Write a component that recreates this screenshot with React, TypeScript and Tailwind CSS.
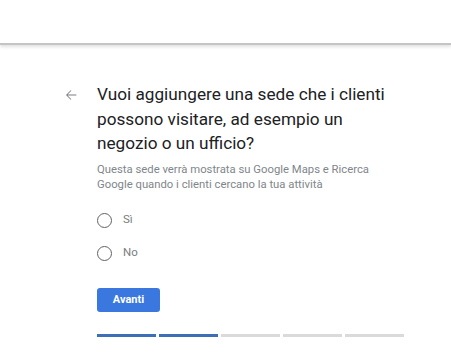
import React from "react";

export default function App() {
  const segs = [true, true, false, false, false];
  return (
    <div className="w-[451px] h-[362px] bg-white overflow-hidden" style={{ fontFamily: "Roboto, 'Noto Sans', sans-serif" }}>
      <div className="h-[45px] bg-white border-b-2 border-[#c4c4c4] shadow-[0_2px_3px_rgba(0,0,0,0.12)]" />
      <div className="flex pl-[63px] pt-[37px]">
        <div className="w-[34px] pt-[5px]">
          <svg width="16" height="16" viewBox="0 0 24 24" className="text-[#7a7e83]">
            <path d="M20 11.3H6.9l5.6-5.6-.9-.9L4.5 12l7.1 7.1.9-.9-5.6-5.6H20z" fill="currentColor" />
          </svg>
        </div>
        <div className="flex flex-col">
          <h1 className="text-[17.2px] leading-[24.5px] text-[#202124] font-normal w-[300px]">
            Vuoi aggiungere una sede che i clienti possono visitare, ad esempio un negozio o un ufficio?
          </h1>
          <p className="mt-[6px] text-[11.3px] leading-[15px] text-[#80868b] w-[290px]">
            Questa sede verrà mostrata su Google Maps e Ricerca Google quando i clienti cercano la tua attività
          </p>
          <div className="mt-[12px] flex flex-col">
            {["Sì", "No"].map((l) => (
              <div key={l} className="h-[33px] flex items-center">
                <div className="w-[15px] h-[15px] rounded-full border-[1.7px] border-[#5f6368]" />
                <span className="ml-[11px] text-[11.5px] text-[#7d7d7d]">{l}</span>
              </div>
            ))}
          </div>
          <div className="mt-[16px]">
            <button className="w-[63px] h-[24px] rounded-[3px] bg-[#3a78e0] text-white text-[11px] font-bold">
              Avanti
            </button>
          </div>
          <div className="mt-[22px] flex gap-[3px]">
            {segs.map((a, i) => (
              <div key={i} className={a ? "w-[59px] h-[3px] bg-[#3c6fb8]" : "w-[59px] h-[3px] bg-[#dadada]"} />
            ))}
          </div>
        </div>
      </div>
    </div>
  );
}
